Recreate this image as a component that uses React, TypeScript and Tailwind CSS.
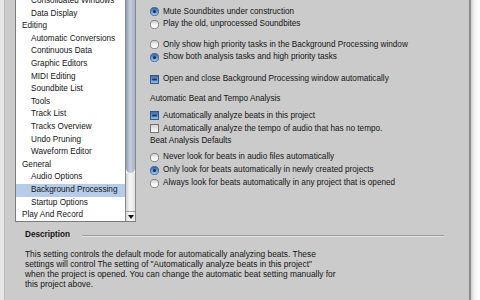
import React from "react";

type Item = { label: string; header?: boolean; selected?: boolean };

const items: Item[] = [
  { label: "Consolidated Windows" },
  { label: "Data Display" },
  { label: "Editing", header: true },
  { label: "Automatic Conversions" },
  { label: "Continuous Data" },
  { label: "Graphic Editors" },
  { label: "MIDI Editing" },
  { label: "Soundbite List" },
  { label: "Tools" },
  { label: "Track List" },
  { label: "Tracks Overview" },
  { label: "Undo Pruning" },
  { label: "Waveform Editor" },
  { label: "General", header: true },
  { label: "Audio Options" },
  { label: "Background Processing", selected: true },
  { label: "Startup Options" },
  { label: "Play And Record", header: true },
];

function Radio({ on }: { on?: boolean }) {
  if (on) {
    return (
      <svg width="9" height="9" viewBox="0 0 9 9" className="shrink-0">
        <defs>
          <linearGradient id="rOn" x1="0" y1="0" x2="0" y2="1">
            <stop offset="0" stopColor="#2f5f9e" />
            <stop offset="0.5" stopColor="#5f97d8" />
            <stop offset="1" stopColor="#a6ceef" />
          </linearGradient>
        </defs>
        <circle cx="4.5" cy="4.5" r="4.1" fill="url(#rOn)" stroke="#3a5a86" strokeWidth="0.8" />
        <circle cx="4.5" cy="4.6" r="1.5" fill="#1a2c4a" />
      </svg>
    );
  }
  return (
    <svg width="9" height="9" viewBox="0 0 9 9" className="shrink-0">
      <defs>
        <linearGradient id="rOff" x1="0" y1="0" x2="0" y2="1">
          <stop offset="0" stopColor="#c8c8c8" />
          <stop offset="0.5" stopColor="#f2f2f2" />
          <stop offset="1" stopColor="#ffffff" />
        </linearGradient>
      </defs>
      <circle cx="4.5" cy="4.5" r="4.1" fill="url(#rOff)" stroke="#6e6e6e" strokeWidth="0.8" />
    </svg>
  );
}

function Check({ on }: { on?: boolean }) {
  if (on) {
    return (
      <svg width="9" height="9" viewBox="0 0 9 9" className="shrink-0">
        <defs>
          <linearGradient id="cOn" x1="0" y1="0" x2="0" y2="1">
            <stop offset="0" stopColor="#3d6cae" />
            <stop offset="0.5" stopColor="#5d92d4" />
            <stop offset="1" stopColor="#9cc4ea" />
          </linearGradient>
        </defs>
        <rect x="0.5" y="0.5" width="8" height="8" fill="url(#cOn)" stroke="#2e4c78" strokeWidth="0.9" />
        <rect x="2.2" y="3.6" width="4.6" height="1.8" fill="#1e355a" />
      </svg>
    );
  }
  return (
    <svg width="9" height="9" viewBox="0 0 9 9" className="shrink-0">
      <defs>
        <linearGradient id="cOff" x1="0" y1="0" x2="0" y2="1">
          <stop offset="0" stopColor="#cfcfcf" />
          <stop offset="1" stopColor="#ffffff" />
        </linearGradient>
      </defs>
      <rect x="0.5" y="0.5" width="8" height="8" fill="url(#cOff)" stroke="#6a6a6a" strokeWidth="0.9" />
    </svg>
  );
}

function Row({ children, mt }: { children: React.ReactNode; mt: string }) {
  return <div className={`flex items-center gap-[4px] h-[12.6px] whitespace-nowrap ${mt}`}>{children}</div>;
}

export default function App() {
  return (
    <div className="w-[480px] h-[300px] flex overflow-hidden font-['Liberation_Sans',Arial,sans-serif] text-[8.2px] text-[#151515]">
      {/* window edge */}
      <div className="w-[5px] bg-[#e6e6e6] border-r border-[#bdbdbd]" />

      <div className="flex-1 bg-[#cbcbcb] flex flex-col">
        <div className="flex h-[222px]">
          {/* category list, scrolled a little */}
          <div className="ml-[10px] w-[121px] flex bg-white border-l border-b border-[#7c7c7c]">
            <div className="flex-1 overflow-hidden">
              <div className="-mt-[5px]">
                {items.map((it) => (
                  <div
                    key={it.label}
                    className={`h-[12.6px] leading-[12.6px] whitespace-nowrap ${
                      it.header ? "pl-[6px]" : "pl-[15px]"
                    } ${it.selected ? "bg-[#b7cce8]" : ""}`}
                  >
                    {it.label}
                  </div>
                ))}
              </div>
            </div>
            {/* scrollbar */}
            <div className="w-[11px] flex flex-col border-l border-r border-[#8a8a8a]">
              <div className="h-[173px] rounded-b-[5px] bg-[linear-gradient(90deg,#8e9db3,#c6d0dc_45%,#a6b3c5)]" />
              <div className="flex-1 bg-[linear-gradient(90deg,#d2d2d2,#f7f7f7_45%,#e2e2e2)]" />
              <div className="h-[10px] flex items-center justify-center border-t border-[#a0a0a0] bg-[linear-gradient(90deg,#dcdcdc,#fafafa_45%,#e6e6e6)]">
                <svg width="6" height="4" viewBox="0 0 6 4">
                  <path d="M0 0H6L3 4Z" fill="#111" />
                </svg>
              </div>
            </div>
          </div>

          {/* options */}
          <div className="flex-1 pl-[14px] pt-[5.4px]">
            <Row mt="mt-0">
              <Radio on />
              <span>Mute Soundbites under construction</span>
            </Row>
            <Row mt="mt-0">
              <Radio />
              <span>Play the old, unprocessed Soundbites</span>
            </Row>
            <Row mt="mt-[8px]">
              <Radio />
              <span>Only show high priority tasks in the Background Processing window</span>
            </Row>
            <Row mt="mt-0">
              <Radio on />
              <span>Show both analysis tasks and high priority tasks</span>
            </Row>
            <Row mt="mt-[9px]">
              <Check on />
              <span>Open and close Background Processing window automatically</span>
            </Row>
            <Row mt="mt-[7.7px]">
              <span>Automatic Beat and Tempo Analysis</span>
            </Row>
            <Row mt="mt-[4px]">
              <Check on />
              <span>Automatically analyze beats in this project</span>
            </Row>
            <Row mt="mt-[0.4px]">
              <Check />
              <span>Automatically analyze the tempo of audio that has no tempo.</span>
            </Row>
            <Row mt="mt-0">
              <span>Beat Analysis Defaults</span>
            </Row>
            <Row mt="mt-[3px]">
              <Radio />
              <span>Never look for beats in audio files automatically</span>
            </Row>
            <Row mt="mt-[0.8px]">
              <Radio on />
              <span>Only look for beats automatically in newly created projects</span>
            </Row>
            <Row mt="mt-0">
              <Radio />
              <span>Always look for beats automatically in any project that is opened</span>
            </Row>
          </div>
        </div>

        {/* description */}
        <div className="pl-[20px] pr-[25px] pt-[8px]">
          <div className="flex items-center gap-[12px] h-[10px]">
            <span className="font-bold">Description</span>
            <div className="flex-1 h-[2px] border-t border-[#9c9c9c] border-b border-b-[#e4e4e4] mt-[2px]" />
          </div>
          <p className="mt-[8.5px] leading-[10px] text-[8.4px]">
            This setting controls the default mode for automatically analyzing beats. These
            <br />
            settings will control The setting of "Automatically analyze beats in this project"
            <br />
            when the project is opened. You can change the automatic beat setting manually for
            <br />
            this project above.
          </p>
        </div>
      </div>

      <div className="w-[2px] bg-[#8a8a8a]" />
      <div className="w-[9px] bg-[linear-gradient(90deg,#cfcfcf,#f4f4f4_40%,#ffffff)]" />
    </div>
  );
}
